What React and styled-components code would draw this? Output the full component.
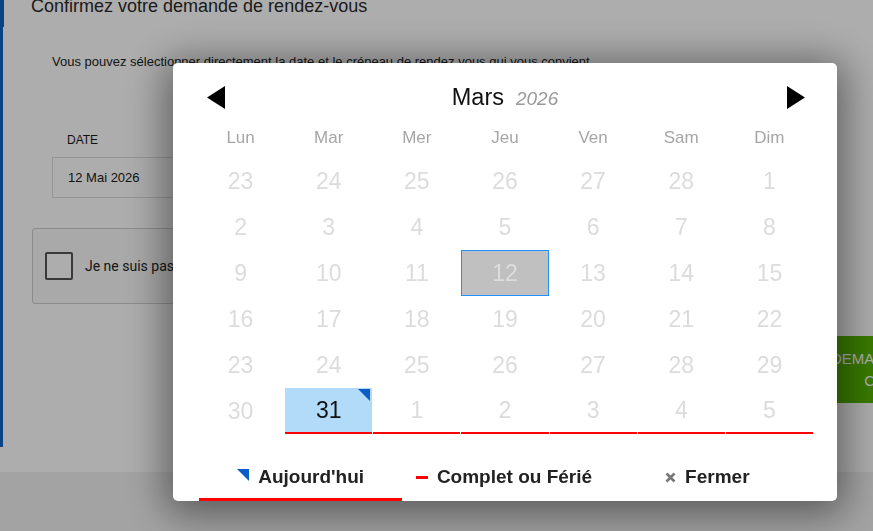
import styled, { createGlobalStyle, css } from "styled-components";

const GlobalStyle = createGlobalStyle`
  html, body {
    margin: 0;
    padding: 0;
    overflow: hidden;
  }
  body {
    font-family: "Liberation Sans", Arial, sans-serif;
    background: #f1f1f1;
  }
`;

const dayNames = ["Lun", "Mar", "Mer", "Jeu", "Ven", "Sam", "Dim"];

const weeks = [
  [23, 24, 25, 26, 27, 28, 1],
  [2, 3, 4, 5, 6, 7, 8],
  [9, 10, 11, 12, 13, 14, 15],
  [16, 17, 18, 19, 20, 21, 22],
  [23, 24, 25, 26, 27, 28, 29],
  [30, 31, 1, 2, 3, 4, 5],
];

function dayFlags(w, d) {
  const today = w === 5 && d === 1;
  const selected = w === 2 && d === 3;
  const full = w === 5 && d >= 1;
  return { today, selected, full };
}

function App() {
  return (
    <>
      <GlobalStyle />
      <Page>
        <Panel>
          <Card>
            <Title>Confirmez votre demande de rendez-vous</Title>
            <Body>
              <Section>
                <Intro>
                  Vous pouvez sélectionner directement la date et le créneau de
                  rendez vous qui vous convient.
                </Intro>
                <Label>DATE</Label>
                <DateInput>12 Mai 2026</DateInput>
              </Section>
              <Captcha>
                <CheckBox />
                <CaptchaText>Je ne suis pas un robot</CaptchaText>
              </Captcha>
              <Actions>
                <SubmitButton>
                  DEMANDER UN RENDEZ-VOUS
                  <br />
                  CONFIRMER L'HEURE
                </SubmitButton>
              </Actions>
            </Body>
          </Card>
        </Panel>
      </Page>

      <Overlay>
        <Modal>
          <Header>
            <svg width="18" height="23" viewBox="0 0 18 23">
              <polygon points="18,0 0,11.5 18,23" fill="#000" />
            </svg>
            <MonthTitle>
              Mars<Year>2026</Year>
            </MonthTitle>
            <svg width="18" height="23" viewBox="0 0 18 23">
              <polygon points="0,0 18,11.5 0,23" fill="#000" />
            </svg>
          </Header>
          <DayNames>
            {dayNames.map((d) => (
              <DayName key={d}>{d}</DayName>
            ))}
          </DayNames>
          <Grid>
            {weeks.map((week, w) =>
              week.map((n, d) => {
                const f = dayFlags(w, d);
                return (
                  <Cell
                    key={w + "-" + d}
                    $today={f.today}
                    $selected={f.selected}
                    $full={f.full}
                  >
                    {n}
                  </Cell>
                );
              })
            )}
          </Grid>
          <Footer>
            <Tab $active>
              <TodayMark />
              Aujourd'hui
            </Tab>
            <Tab>
              <FullMark />
              Complet ou Férié
            </Tab>
            <Tab>
              <svg width="11" height="11" viewBox="0 0 11 11">
                <path
                  d="M1.5 1.5 L9.5 9.5 M9.5 1.5 L1.5 9.5"
                  stroke="#777"
                  strokeWidth="2.6"
                />
              </svg>
              Fermer
            </Tab>
          </Footer>
        </Modal>
      </Overlay>
    </>
  );
}

const Page = styled.div`
  min-height: 100vh;
  width: 1100px;
`;

const Panel = styled.div`
  background: #fff;
  padding-bottom: 25px;
`;

const Card = styled.div`
  border-left: 3px solid #0f64c4;
`;

const Title = styled.h1`
  margin: -4px 0 0;
  padding: 0 0 11px 27px;
  border-left: 1px solid #0f64c4;
  font-size: 18px;
  line-height: 20px;
  font-weight: normal;
  color: #2a2a2a;
`;

const Body = styled.div`
  padding: 0 46px 44px 29px;
`;

const Section = styled.div`
  padding-left: 20px;
`;

const Intro = styled.p`
  margin: 27px 0 0;
  font-size: 13px;
  line-height: 15px;
  color: #222;
`;

const Label = styled.div`
  margin-top: 64px;
  padding-left: 15px;
  font-size: 12px;
  line-height: 14px;
  color: #1a1a1a;
`;

const DateInput = styled.div`
  margin-top: 10px;
  width: 300px;
  height: 41px;
  box-sizing: border-box;
  border: 1px solid #dcdcdc;
  padding-left: 15px;
  display: flex;
  align-items: center;
  font-size: 13px;
  color: #1a1a1a;
`;

const Captcha = styled.div`
  margin-top: 30px;
  width: 304px;
  height: 76px;
  box-sizing: border-box;
  border: 1px solid #cfcfcf;
  border-radius: 3px;
  background: #f9f9f9;
  display: flex;
  align-items: center;
  padding-left: 12px;
  gap: 12px;
`;

const CheckBox = styled.div`
  width: 28px;
  height: 28px;
  box-sizing: border-box;
  border: 2px solid #555;
  border-radius: 2px;
  background: #fff;
`;

const CaptchaText = styled.span`
  font-family: Roboto, "Liberation Sans", sans-serif;
  font-size: 14px;
  color: #222;
`;

const Actions = styled.div`
  margin-top: 32px;
  display: flex;
  justify-content: flex-end;
`;

const SubmitButton = styled.div`
  width: 221px;
  height: 67px;
  box-sizing: border-box;
  background: #55b300;
  color: #fff;
  font-size: 15px;
  line-height: 22px;
  white-space: nowrap;
  text-align: center;
  display: flex;
  align-items: center;
  justify-content: center;
`;

const Overlay = styled.div`
  position: fixed;
  inset: 0;
  background: rgba(0, 0, 0, 0.32);
`;

const Modal = styled.div`
  position: absolute;
  left: 173px;
  top: 63px;
  width: 664px;
  height: 438px;
  box-sizing: border-box;
  padding: 0 24px;
  background: #fff;
  border-radius: 5px;
  box-shadow: 0 6px 40px 8px rgba(0, 0, 0, 0.45);
`;

const Header = styled.div`
  height: 64px;
  box-sizing: border-box;
  padding: 4px 8px 0 10px;
  display: flex;
  align-items: center;
  justify-content: space-between;
`;

const MonthTitle = styled.div`
  font-size: 23.5px;
  color: #111;
  display: flex;
  align-items: baseline;
  margin-left: -2px;
`;

const Year = styled.span`
  margin-left: 12px;
  font-size: 19px;
  font-style: italic;
  color: #9a9a9a;
`;

const DayNames = styled.div`
  display: grid;
  grid-template-columns: repeat(7, 1fr);
  column-gap: 1px;
  height: 20px;
  padding-top: 1px;
`;

const DayName = styled.div`
  text-align: center;
  font-size: 17px;
  line-height: 20px;
  color: #a6a6a6;
`;

const Grid = styled.div`
  margin-top: 10px;
  display: grid;
  grid-template-columns: repeat(7, 1fr);
  grid-auto-rows: 46px;
  column-gap: 1px;
`;

const Cell = styled.div`
  position: relative;
  box-sizing: border-box;
  display: flex;
  align-items: center;
  justify-content: center;
  font-size: 23px;
  color: #dcdcdc;
  ${(p) =>
    p.$selected &&
    css`
      background: #c0c0c0;
      border: 1px solid #1e90ff;
    `}
  ${(p) =>
    p.$today &&
    css`
      background: #b2dbfa;
      color: #111;
      &::after {
        content: "";
        position: absolute;
        top: 1px;
        right: 2px;
        border-style: solid;
        border-width: 0 12px 12px 0;
        border-color: transparent #0a5cc7 transparent transparent;
      }
    `}
  ${(p) =>
    p.$full &&
    css`
      border-bottom: 2px solid #ff0000;
    `}
`;

const Footer = styled.div`
  margin-top: 22px;
  display: grid;
  grid-template-columns: repeat(3, 1fr);
  padding: 0 4px 0 2px;
`;

const Tab = styled.div`
  height: 45px;
  box-sizing: border-box;
  display: flex;
  align-items: center;
  justify-content: center;
  gap: 9px;
  font-size: 19px;
  font-weight: bold;
  color: #222;
  border-bottom: 3px solid ${(p) => (p.$active ? "#ff0000" : "transparent")};
`;

const TodayMark = styled.span`
  width: 0;
  height: 0;
  border-style: solid;
  border-width: 0 12px 12px 0;
  border-color: transparent #0a5cc7 transparent transparent;
  margin-top: -4px;
`;

const FullMark = styled.span`
  width: 12px;
  height: 3px;
  background: #ff0000;
`;

export default App;
